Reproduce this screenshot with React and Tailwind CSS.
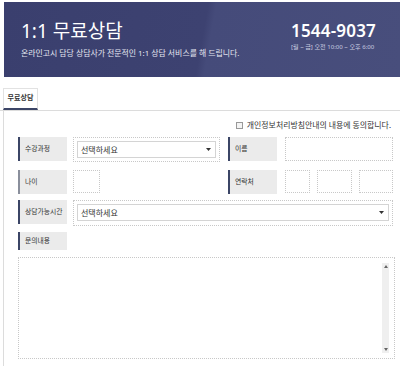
import React from "react";

const Label = ({ children, bar = "border-[#3b4566]", className = "h-[24px]" }) => (
  <div className={`w-[49px] shrink-0 border-l-2 ${bar} bg-[#ebebeb] flex items-center pl-[5px] text-[6.8px] text-[#333] ${className}`}>
    {children}
  </div>
);

const Dotted = ({ className = "", children }) => (
  <div className={`border border-dotted border-[#c8c8c8] ${className}`}>{children}</div>
);

const Select = ({ className = "" }) => (
  <div className={`h-[17px] border border-[#d4d4d4] bg-white flex items-center justify-between pl-[3px] pr-[4px] ${className}`}>
    <span className="text-[8px] text-[#333]">선택하세요</span>
    <svg width="5" height="3" viewBox="0 0 5 3">
      <path d="M0 0h5L2.5 3z" fill="#333" />
    </svg>
  </div>
);

const App = () => {
  return (
    <div
      className="w-[400px] h-[366px] bg-white overflow-hidden"
      style={{ fontFamily: '"Noto Sans", "Noto Sans CJK KR", sans-serif' }}
    >
      {/* banner */}
      <div className="ml-[4px] mt-[2px] h-[75px] flex justify-between bg-[linear-gradient(100deg,#3a3f6e_0%,#3d4271_50%,#454b7a_52%,#484e7c_100%)]">
        <div className="pl-[17px] pt-[19px]">
          <div className="text-[19px] leading-[20px] text-white font-normal">1:1 무료상담</div>
          <div className="mt-[7px] text-[7.9px] leading-[10px] text-[#e4e6f0]">
            온라인고시 담당 상담사가 전문적인 1:1 상담 서비스를 해 드립니다.
          </div>
        </div>
        <div className="pr-[24px] pt-[19px] flex flex-col items-start">
          <div className="text-[17px] leading-[20px] text-white font-semibold tracking-[0.2px]">1544-9037</div>
          <div className="mt-[2px] text-[6.1px] leading-[8px] text-[#c9cce0]">[월 ~ 금] 오전 10:00 ~ 오후 6:00</div>
        </div>
      </div>

      {/* tab */}
      <div className="mt-[11px] flex items-end border-b border-[#dcdcdc]">
        <div className="ml-[3px] w-[35px] h-[22px] border-l border-r border-t border-[#e2e2e2] border-b-2 border-b-[#3b4566] flex items-center justify-center text-[7px] font-semibold text-[#333]">
          무료상담
        </div>
      </div>

      {/* content */}
      <div className="ml-[3px] h-[260px] border-l border-[#dcdcdc]">
        <div className="pt-[10px] pr-[9px] flex justify-end items-center">
          <div className="w-[7px] h-[7px] border border-[#999] bg-[#f4f4f4]" />
          <span className="ml-[4px] text-[7.9px] leading-[9px] text-[#333]">개인정보처리방침안내의 내용에 동의합니다.</span>
        </div>

        <div className="pl-[14px]">
          {/* row 1 */}
          <div className="mt-[7px] flex items-start">
            <div className="w-[202px] flex">
              <Label>수강과정</Label>
              <Dotted className="ml-[6px] w-[147px] h-[25px] p-[3px]">
                <Select />
              </Dotted>
            </div>
            <div className="ml-[8px] flex">
              <Label>이름</Label>
              <Dotted className="ml-[8px] w-[108px] h-[24px]" />
            </div>
          </div>

          {/* row 2 */}
          <div className="mt-[8px] flex items-start">
            <div className="w-[202px] flex">
              <Label bar="border-[#8a8f9c]">나이</Label>
              <Dotted className="ml-[6px] w-[27px] h-[23px]" />
            </div>
            <div className="ml-[8px] flex">
              <Label>연락처</Label>
              <Dotted className="ml-[8px] w-[25px] h-[23px]" />
              <Dotted className="ml-[7px] w-[35px] h-[23px]" />
              <Dotted className="ml-[7px] w-[34px] h-[23px]" />
            </div>
          </div>

          {/* row 3 */}
          <div className="mt-[6px] flex items-start">
            <Label>상담가능시간</Label>
            <Dotted className="ml-[6px] w-[320px] h-[26px] p-[3px]">
              <Select />
            </Dotted>
          </div>

          {/* row 4 */}
          <div className="mt-[6px] flex">
            <Label className="h-[18px]">문의내용</Label>
          </div>

          <Dotted className="mt-[7px] w-[377px] h-[102px] flex justify-end pt-[5px] pb-[5px] pr-[5px]">
            <div className="w-[7px] bg-[#efefef] flex flex-col items-center justify-between py-[2px]">
              <svg width="4" height="3" viewBox="0 0 4 3">
                <path d="M0 3L2 0L4 3z" fill="#666" />
              </svg>
              <svg width="4" height="3" viewBox="0 0 4 3">
                <path d="M0 0h4L2 3z" fill="#666" />
              </svg>
            </div>
          </Dotted>
        </div>
      </div>
    </div>
  );
};

export default App;
